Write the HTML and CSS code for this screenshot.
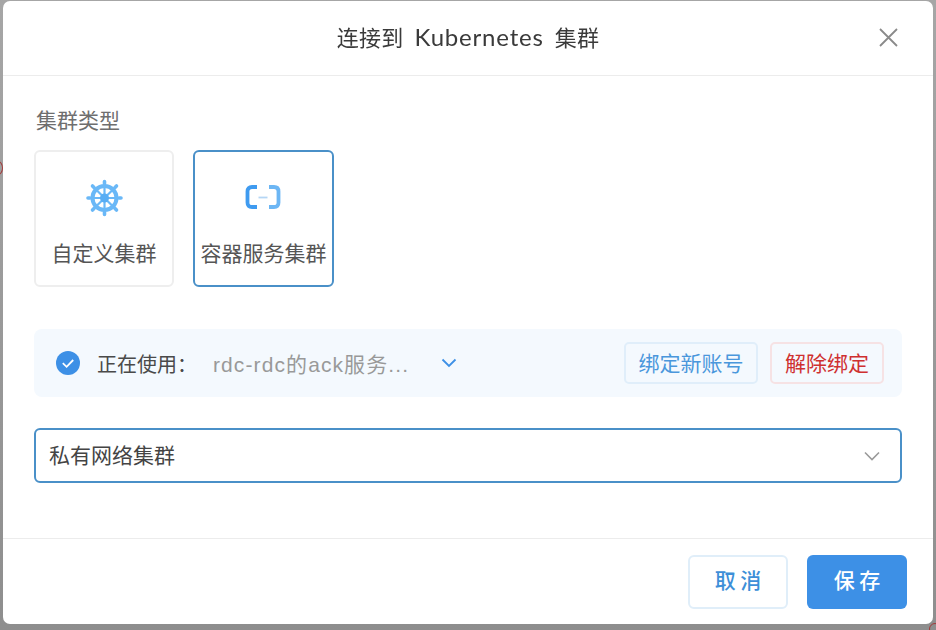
FILE: index.html
```html
<!DOCTYPE html>
<html lang="zh-CN">
<head>
<meta charset="utf-8">
<title>连接到 Kubernetes 集群</title>
<link rel="stylesheet" href="styles.css">
</head>
<body>
<span class="backdrop-mark mark-left"></span>
<span class="backdrop-mark mark-corner"></span>
<div class="modal">
  <header class="modal-header">
    <h1 class="modal-title">连接到 <span class="latin">Kubernetes</span> 集群</h1>
    <button class="close" aria-label="关闭">
      <svg viewBox="0 0 19 19" width="19" height="19"><path d="M1 1 L18 18 M18 1 L1 18" stroke="#8a8a8a" stroke-width="1.8" fill="none"/></svg>
    </button>
  </header>
  <main class="modal-body">
    <div class="field-label">集群类型</div>
    <div class="cards">
      <div class="card">
        <svg class="card-icon" viewBox="0 0 40 40" width="40" height="40">
          <g fill="none" stroke="#6ab8f7">
            <circle cx="20.500" cy="20" r="12" stroke-width="4"/>
            <path stroke-width="2.200" d="M20.500 3.500V36.500M4 20H37M8.500 8L32.500 32M32.500 8L8.500 32"/>
            <path stroke-width="3.600" stroke-linecap="round" d="M20.500 3.500v2M20.500 34.500v2M4 20h2M35 20h2M8.500 8l1.500 1.500M31 30.500L32.500 32M32.500 8L31 9.500M10 30.500L8.500 32"/>
          </g>
          <circle cx="20.500" cy="20" r="4.500" fill="#58adf4"/>
        </svg>
        <div class="card-text">自定义集群</div>
      </div>
      <div class="card selected">
        <svg class="card-icon" viewBox="0 0 40 40" width="40" height="40">
          <path d="M13 9H8Q3.500 9 3.500 13.500V24.500Q3.500 29 8 29H13" fill="none" stroke="#3f9bf0" stroke-width="3.800"/>
          <path d="M25 9H30Q34.500 9 34.500 13.500V24.500Q34.500 29 30 29H25" fill="none" stroke="#6cb6f4" stroke-width="3.800"/>
          <path d="M14.500 19.500H23.500" stroke="#b5d6f5" stroke-width="1.800"/>
        </svg>
        <div class="card-text">容器服务集群</div>
      </div>
    </div>
    <div class="account-bar">
      <svg class="check" viewBox="0 0 24 24" width="24" height="24">
        <circle cx="12" cy="12" r="12" fill="#3d90e6"/>
        <path d="M6.800 12.200L10.600 15.800L17.200 9" fill="none" stroke="#fff" stroke-width="1.800"/>
      </svg>
      <span class="account-label">正在使用：</span>
      <span class="account-name">rdc-rdc的ack服务...</span>
      <svg class="account-caret" viewBox="0 0 16 10" width="16" height="10"><path d="M1.500 1.500L8 8L14.500 1.500" fill="none" stroke="#3d90e6" stroke-width="1.800"/></svg>
      <div class="account-actions">
        <button class="btn-sm btn-bind">绑定新账号</button>
        <button class="btn-sm btn-unbind">解除绑定</button>
      </div>
    </div>
    <div class="select">
      <span class="select-value">私有网络集群</span>
      <svg viewBox="0 0 16 10" width="16" height="10"><path d="M1 1.500L8 8.500L15 1.500" fill="none" stroke="#9a9a9a" stroke-width="1.600"/></svg>
    </div>
  </main>
  <footer class="modal-footer">
    <button class="btn btn-cancel">取 消</button>
    <button class="btn btn-save">保 存</button>
  </footer>
</div>
</body>
</html>
```
FILE: styles.css
```css
* { box-sizing: border-box; }
html, body { margin: 0; height: 100%; }
body {
  position: relative;
  width: 936px;
  height: 630px;
  overflow: hidden;
  padding: 1px 3px 0;
  background: linear-gradient(#a6a6a6, #8e8e8e);
  font-family: "Noto Sans CJK SC", "Liberation Sans", sans-serif;
}
button { font-family: inherit; cursor: pointer; }
.backdrop-mark {
  position: absolute;
  border: 1px solid #a33a3a;
  border-radius: 50%;
}
.mark-left { left: -7px; top: 161px; width: 10px; height: 14px; }
.mark-corner { left: 929px; top: 623px; width: 12px; height: 12px; }
.modal {
  position: relative;
  width: 930px;
  height: 623px;
  background: #fff;
  border-radius: 7px;
  display: flex;
  flex-direction: column;
  filter: blur(0.35px);
}
.modal-header {
  height: 75px;
  flex: none;
  border-bottom: 1px solid #ececec;
  display: flex;
  align-items: center;
  justify-content: center;
  padding-bottom: 4px;
  position: relative;
}
.modal-title {
  margin: 0;
  font-size: 22px;
  font-weight: 400;
  color: #3a3a3a;
  word-spacing: 6px;
  letter-spacing: 0.2px;
  white-space: nowrap;
}
.latin {
  font-family: "Lato", sans-serif;
  font-size: 24px;
  letter-spacing: 0.8px;
}
.close {
  position: absolute;
  right: 35px;
  top: 27px;
  width: 19px;
  height: 19px;
  padding: 0;
  border: 0;
  background: none;
  display: flex;
}
.modal-body {
  flex: 1;
  padding: 29px 31px 0;
}
.field-label {
  font-size: 21px;
  line-height: 28px;
  color: #6e6e6e;
  margin: 0 0 17px 2px;
}
.cards { display: flex; gap: 19px; }
.card {
  width: 140px;
  height: 137px;
  border: 2px solid #eeeeee;
  border-radius: 6px;
  display: flex;
  flex-direction: column;
  align-items: center;
  padding-top: 26px;
}
.card.selected { width: 141px; border-color: #4a90c8; }
.card-text {
  margin-top: 19px;
  font-size: 21px;
  line-height: 30px;
  color: #555;
  white-space: nowrap;
}
.account-bar {
  margin-top: 42px;
  height: 68px;
  background: #f4f9fe;
  border-radius: 8px;
  display: flex;
  align-items: center;
  padding: 0 18px 0 22px;
}
.account-label {
  margin-left: 17px;
  font-size: 20px;
  color: #4a4a4a;
  white-space: nowrap;
  width: 116px;
}
.account-name {
  font-size: 21px;
  color: #999;
  letter-spacing: 1.1px;
  font-family: "Liberation Sans", "Noto Sans CJK SC", sans-serif;
  white-space: nowrap;
  width: 228px;
}
.account-actions { margin-left: auto; display: flex; gap: 12px; }
.btn-sm {
  height: 42px;
  padding: 0 0 2px;
  font-size: 21px;
  background: transparent;
  border-radius: 5px;
  white-space: nowrap;
}
.btn-bind { width: 134px; color: #4a97dc; border: 2px solid #e0eefa; }
.btn-unbind { width: 114px; color: #cf3030; border: 2px solid #f6e2e4; }
.select {
  margin-top: 31px;
  height: 55px;
  border: 2px solid #4a90c8;
  border-radius: 6px;
  display: flex;
  align-items: center;
  justify-content: space-between;
  padding: 0 20px 0 13px;
  font-size: 21px;
  color: #444;
}
.select-value { margin-bottom: 4px; }
.modal-footer {
  flex: none;
  height: 86px;
  border-top: 1px solid #ececec;
  display: flex;
  justify-content: flex-end;
  gap: 19px;
  padding: 16px 26px 0 0;
}
.btn {
  width: 100px;
  height: 54px;
  padding: 0 0 6px;
  font-size: 21px;
  font-weight: 500;
  border-radius: 6px;
}
.btn-cancel { color: #3d8fd8; background: #fff; border: 2px solid #e0eef9; }
.btn-save { color: #fff; background: #3d90e6; border: 0; }
```
